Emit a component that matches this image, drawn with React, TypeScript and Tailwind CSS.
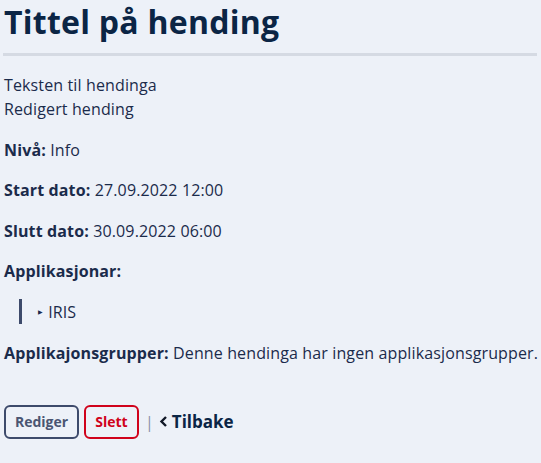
import React from 'react';

const font = { fontFamily: '"Open Sans", "Noto Sans", sans-serif' };

const Field: React.FC<{ label: string; children?: React.ReactNode }> = ({ label, children }) => (
  <p className="mt-[16.5px] whitespace-nowrap">
    <span className="font-bold">{label}:</span> {children}
  </p>
);

const App: React.FC = () => {
  return (
    <div className="min-h-[463px] bg-[#edf1f8] text-[#1b2b4b] px-1 text-[16px] leading-[24px] tracking-[0.13px]" style={font}>
      <h1 className="text-[32px] leading-[44px] font-bold text-[#0b2545] tracking-[0.25px]">Tittel på hending</h1>
      <hr className="mt-[9px] -ml-px border-0 h-[3px] bg-[#d5dae3]" />
      <div className="mt-[17px]">
        <p>Teksten til hendinga</p>
        <p>Redigert hending</p>
      </div>
      <Field label="Nivå">Info</Field>
      <Field label="Start dato">27.09.2022 12:00</Field>
      <Field label="Slutt dato">30.09.2022 06:00</Field>
      <p className="mt-[16.5px] font-bold">Applikasjonar:</p>
      <div className="mt-[16px] ml-[15px] border-l-[3px] border-[#3d4a6b] pl-[16px] h-[25px] flex items-center">
        <span className="text-[6px] mr-[5px]">▶</span>
        <span>IRIS</span>
      </div>
      <Field label="Applikajonsgrupper">Denne hendinga har ingen applikasjonsgrupper.</Field>
      <div className="mt-[40px] flex items-center tracking-normal">
        <button className="h-[34px] w-[75px] rounded-[6px] border-2 border-[#3d4a6b] text-[#4a5572] font-bold text-[14px]">Rediger</button>
        <button className="ml-[5px] h-[34px] w-[55px] rounded-[6px] border-2 border-[#d0021b] text-[#d0021b] font-bold text-[14px]">Slett</button>
        <span className="ml-[6px] text-[#8a8fa8]">|</span>
        <span className="ml-[5px] flex items-center font-bold text-[#0b2545] text-[17px]">
          <svg width="9" height="13" viewBox="0 0 9 13" className="mr-[4px]">
            <path d="M7 2 L2.5 6.5 L7 11" fill="none" stroke="#111827" strokeWidth="2.4" />
          </svg>
          <span>Tilbake</span>
        </span>
      </div>
    </div>
  );
};

export default App;
